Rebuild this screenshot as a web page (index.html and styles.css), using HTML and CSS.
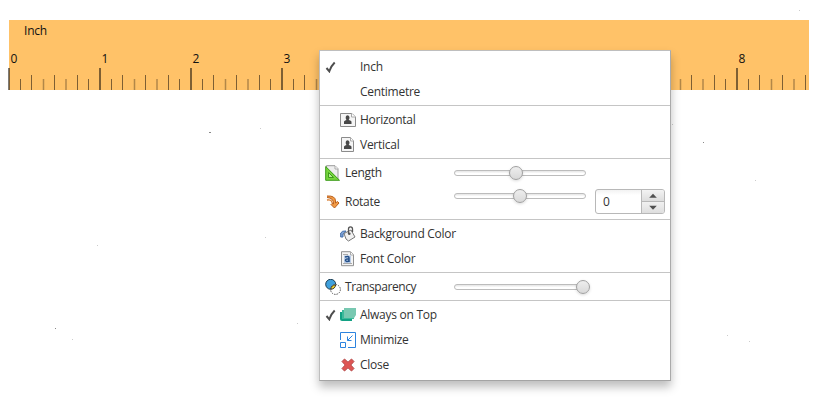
FILE: index.html
```html
<!DOCTYPE html>
<html lang="en">
<head>
<meta charset="utf-8">
<title>Ruler</title>
<link rel="stylesheet" href="styles.css">
</head>
<body>
<svg class="specks" width="820" height="401"><path d="M209 132h2v1h-2zM703 142h1v1h-1zM55 328h1v1h-1z" fill="#888"/><path d="M260 128h1v1h-1zM672 124h1v1h-1zM265 237h1v1h-1zM97 245h1v1h-1zM72 339h1v1h-1zM297 323h1v1h-1zM727 335h1v1h-1zM749 341h1v1h-1zM755 180h1v1h-1zM799 10h1v1h-1z" fill="#ccc"/></svg>
<main class="ruler">
  <div class="unit">Inch</div>
  <div class="numbers"><span>0</span><span>1</span><span>2</span><span>3</span><span class="eighth">8</span></div>
  <svg class="ticks" width="800" height="22">
    <defs><g id="inch"><path class="major" d="M0 0V22"/><path class="minor" d="M11.5 11V22M22.5 7V22M45.5 7V22M68.5 7V22"/><path class="soft" d="M34.5 11V22M57 11V22"/></g></defs>
    <use href="#inch"/><use href="#inch" x="91"/><use href="#inch" x="182"/><use href="#inch" x="273"/><use href="#inch" x="364"/><use href="#inch" x="455"/><use href="#inch" x="546"/><use href="#inch" x="637"/><use href="#inch" x="728"/>
    <path class="minor" d="M79.5 11V22M170.500 11V22M261.500 11V22M352.500 11V22M443.500 11V22M534.500 11V22M625.500 11V22M716.500 11V22"/>
  </svg>
</main>
<nav class="menu">
  <section class="group first">
    <div class="item"><svg class="check" viewBox="0 0 12 12"><path d="M1.500 7L4.300 10.300Q6 5 9.700 1.500"/></svg><span class="icon"></span>Inch</div>
    <div class="item"><span class="check"></span><span class="icon"></span>Centimetre</div>
  </section>
  <section class="group">
    <div class="item"><span class="check"></span><svg class="icon" viewBox="0 0 16 16"><path d="M.5 1.500H12L15.500 5V14.500H.5Z" fill="#f5f5f5" stroke="#8b8b8b"/><path d="M11.500 1.500V5H15.500" fill="#fff" stroke="#aaa"/><path d="M4 12V9.500Q5 8 6.500 8Q5.500 7 5.700 5Q6 3.300 7.500 3.300T9.500 5Q9.600 7 8.700 8Q10.500 8 11.500 9.500V12Z" fill="#484848"/></svg>Horizontal</div>
    <div class="item"><span class="check"></span><svg class="icon" viewBox="0 0 16 16"><path d="M1.500 .5H10.500L13.500 4V14.500H1.500Z" fill="#f5f5f5" stroke="#8b8b8b"/><path d="M10.500 .5V4H13.500" fill="#fff" stroke="#aaa"/><path d="M4 12V9.500Q5 8 6.500 8Q5.500 7 5.700 5Q6 3.300 7.500 3.300T9.500 5Q9.600 7 8.700 8Q10.500 8 11.500 9.500V12Z" fill="#484848"/></svg>Vertical</div>
  </section>
  <section class="group">
    <div class="control lifted"><svg class="icon" viewBox="0 0 16 16"><path d="M1.500 .7H10L13 3.700V14.500H1.500Z" fill="#eee" stroke="#999"/><path d="M10 1V4H13" fill="#fff" stroke="#aaa"/><path d="M.7 1.500L14.500 15.300H.7Z" fill="#76d53c" stroke="#3e9b1b"/><path d="M3.500 7.500L8.500 12.500H3.500Z" fill="#b5ec92" stroke="#3e9b1b"/></svg><span class="name">Length</span><span class="slider"><i class="at-length"></i></span></div>
    <div class="control lifted rotate"><svg class="icon" viewBox="0 0 16 16"><path d="M2 2Q10.500 1.500 10.500 7V9L12.500 7.500L14 9L9.500 14L6 10.500L7 9.500L8.500 10Q9 4 2 3.500" fill="#f39b45" stroke="#b9601d"/><path d="M2 6Q6.500 5 7.300 9" fill="none" stroke="#d67a2c" stroke-width="1.300"/></svg><span class="name">Rotate</span><span class="slider raised"><i class="at-rotate"></i></span><span class="spinner"><b>0</b><span class="steps"><svg viewBox="0 0 23 12"><path d="M7.500 8L11.500 4L15.500 8Z"/></svg><svg viewBox="0 0 23 12"><path d="M7.500 4L11.500 8L15.500 4Z"/></svg></span></span></div>
  </section>
  <section class="group">
    <div class="item"><span class="check"></span><svg class="icon" viewBox="0 0 16 16"><path d="M.7 11V7Q2 4.500 6 5L4 7.500L3 8V11Z" fill="#7fa3d6" stroke="#426ca8"/><path d="M4 7.500L11 4L15 11L8.500 15L6 13Z" fill="#f1f1f1" stroke="#777"/><path d="M8.500 8V3Q8.500 .8 10.500 .8T12.500 3V6" fill="none" stroke="#555" stroke-width="1.300"/><circle cx="9.300" cy="7.700" r="1.300" fill="#555"/></svg>Background Color</div>
    <div class="item"><span class="check"></span><svg class="icon" viewBox="0 0 16 16"><path d="M1.500 .7H10.500L13.500 3.700V14.700H1.500Z" fill="#f4f4f4" stroke="#909090"/><path d="M10.500 1V4H13.500" fill="#fff" stroke="#aaa"/><path d="M3 3.500H8M3 12.500H12" stroke="#aaa"/><rect x="4" y="4.500" width="7" height="7.500" fill="#b9cce6"/><path d="M5 6Q9 4.700 9 7V11M9 8Q5.500 7.500 5.500 9.500Q6.500 11.500 9 9.500" fill="none" stroke="#244f88" stroke-width="1.500"/></svg>Font Color</div>
  </section>
  <section class="group">
    <div class="control short"><svg class="icon" viewBox="0 0 16 16"><circle cx="5.700" cy="5.300" r="5" fill="#3fa0dc" stroke="#1d3c50"/><circle cx="10.500" cy="10.500" r="4.900" fill="#fff" stroke="#555" stroke-dasharray="1.500 1"/><path d="M5.800 10.300Q6.200 6 10.600 5.800Q10.300 9.800 5.800 10.300Z" fill="#f5d72a" stroke="#333"/></svg><span class="name">Transparency</span><span class="slider"><i class="at-end"></i></span></div>
  </section>
  <section class="group last">
    <div class="item"><svg class="check" viewBox="0 0 12 12"><path d="M1.500 7L4.300 10.300Q6 5 9.700 1.500"/></svg><svg class="icon" viewBox="0 0 16 16"><path d="M0 5H12V14H2Q0 14 0 12Z" fill="#12a184"/><path d="M2 3H14V12H2Z" fill="#3dba9b"/><path d="M4 1H16V8L14 11H4Z" fill="#78c8b1"/></svg>Always on Top</div>
    <div class="item"><span class="check"></span><svg class="icon" viewBox="0 0 16 16" fill="none" stroke="#2c83df"><path d="M.5 8V.5H15.500V15.500H8M.5 10.500H5.500V15.500H.5ZM12.500 3.500L7.500 8.500M7.500 4.500V8.500H11.500"/></svg>Minimize</div>
    <div class="item"><span class="check"></span><svg class="icon" viewBox="0 0 16 16"><path d="M2 4.500L4.500 2L8 5.200L11.500 2L14 4.500L10.800 8L14 11.500L11.500 14L8 10.800L4.500 14L2 11.500L5.200 8Z" fill="#df5553" stroke="#b54b4b"/></svg>Close</div>
  </section>
</nav>
</body>
</html>
```
FILE: styles.css
```css
* { box-sizing: border-box; }
body { margin: 0; width: 820px; height: 401px; overflow: hidden; background: #fff; position: relative; font: 12px/16px "Open Sans", "Noto Sans", sans-serif; color: #333; }
svg { display: block; }
.specks { position: absolute; left: 0; top: 0; }
.ruler { position: relative; width: 800px; height: 70px; margin: 0 0 0 9px; top: 20px; background: #ffc268; color: #111; display: flex; flex-direction: column; }
.unit { height: 31px; padding: 3px 0 0 15px; letter-spacing: -.2px; }
.numbers { height: 17px; display: flex; padding-left: 1.5px; }
.numbers span { width: 91px; flex: none; }
.numbers .eighth { width: 20px; margin-left: 364px; }
.ticks { overflow: visible; }
.ticks path { stroke: rgba(20, 15, 8, .55); fill: none; }
.ticks .major { stroke-width: 2; }
.ticks .soft { stroke-width: 1.5; stroke: rgba(20, 15, 8, .33); }

.menu { position: absolute; left: 319px; top: 50px; width: 352px; height: 331px; background: #fff; border: 1px solid #b5b5b5; border-color: #bebebe #aaa #a4a4a4 #bebebe; box-shadow: 0 6px 9px rgba(0, 0, 0, .26); letter-spacing: -.27px; }
.group { padding: 1px 0; border-bottom: 1px solid #c5c5c5; }
.group.first { padding-top: 3px; }
.group.last { border: 0; }
.item { height: 25px; display: flex; align-items: center; padding-left: 5px; }
.check { width: 12px; height: 12px; margin-right: 3px; flex: none; }
.check path { fill: none; stroke: #4d4d4d; stroke-width: 2; }
.icon { width: 16px; height: 16px; margin-right: 4px; flex: none; }
.control { height: 27px; display: flex; align-items: center; padding-left: 5px; }
.control.rotate { height: 31px; }
.control.short { height: 25px; }
.control.lifted { padding-bottom: 2px; }
.name { width: 109px; }
.short .name { letter-spacing: -.4px; }
.slider { width: 132px; height: 6px; display: flex; align-items: center; border: 1px solid #bcbcbc; border-radius: 3px; background: linear-gradient(#e4e4e4, #fff 60%); }
.slider i { flex: none; width: 14px; height: 14px; border: 1px solid #a0a0a0; border-radius: 50%; background: linear-gradient(#eee, #d9d9d9); box-shadow: 0 1px 3px rgba(0, 0, 0, .15); }
.raised { margin-bottom: 12px; }
.at-length { margin-left: 54px; }
.at-rotate { margin-left: 58px; }
.at-end { margin-left: 121px; }
.spinner { margin-left: 9px; width: 70px; height: 25px; display: flex; border: 1px solid #b8b8b8; border-radius: 3px; overflow: hidden; background: linear-gradient(#f2f2f2, #fff 5px); }
.spinner b { width: 45px; padding: 4px 0 0 7px; font-weight: 400; }
.steps { width: 23px; border-left: 1px solid #b8b8b8; background: linear-gradient(#f3f3f3, #ddd 48%, #b8b8b8 48%, #b8b8b8 52%, #f1f1f1 52%, #dedede); }
.steps path { fill: #505050; }
.steps svg { width: 22px; height: 11.5px; }
```
